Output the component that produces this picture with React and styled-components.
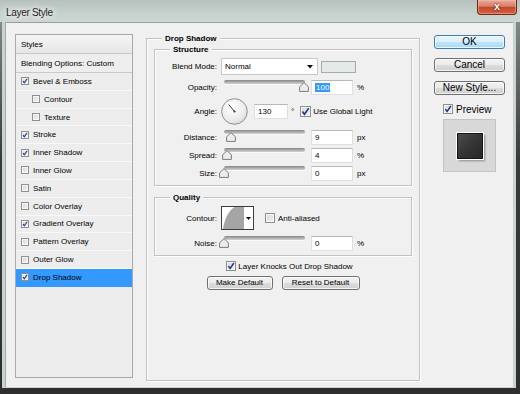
import React from 'react';
import styled, { createGlobalStyle } from 'styled-components';

const Global = createGlobalStyle`
  html, body { margin: 0; padding: 0; background: #3a3a3a; }
  body { font-family: "Liberation Sans", Arial, sans-serif; }
  * { box-sizing: border-box; }
`;

const Window = styled.div`
  width: 520px;
  height: 394px;
  display: flex;
  flex-direction: column;
  overflow: hidden;
  background: linear-gradient(180deg, #8f9996 0px, #6a706e 60px, #3a3a3a 160px, #2f2f2f 100%);
`;

const TitleBar = styled.div`
  height: 22px;
  flex: none;
  display: flex;
  align-items: flex-start;
  background: linear-gradient(180deg, #b6c1bd 0%, #c6d0cd 55%, #cdd7d4 100%);
`;

const TitleText = styled.div`
  padding: 7px 0 0 6px;
  font-family: "Liberation Sans", Arial, sans-serif;
  font-size: 10px;
  line-height: 12px;
  letter-spacing: -0.3px;
  color: #1c1c1c;
  text-shadow: 0 0 4px #fff, 0 0 8px #fff, 0 0 12px rgba(255, 255, 255, 0.8);
`;

const CloseButton = styled.div`
  margin-left: auto;
  margin-right: 3px;
  width: 40px;
  height: 15px;
  border: 1px solid #6b2a1c;
  border-top: none;
  border-radius: 0 0 4px 4px;
  background: linear-gradient(180deg, #e9a897 0%, #d98068 45%, #c4482c 52%, #d2603f 100%);
  box-shadow: inset 0 0 0 1px rgba(255, 200, 180, 0.45);
  display: flex;
  align-items: center;
  justify-content: center;
  color: #fff;
  font-family: "Liberation Sans", Arial, sans-serif;
  font-weight: bold;
  font-size: 11px;
  line-height: 11px;
  padding-bottom: 2px;
  text-shadow: 0 0 2px #5a1508, 0 0 1px #5a1508;
`;

const Frame = styled.div`
  flex: 1;
  display: flex;
  padding: 0 4px 6px 2px;
`;

const FrameInner = styled.div`
  flex: 1;
  display: flex;
  padding: 0 3px 1px 3px;
  background: #cbd3d0;
`;

const Client = styled.div`
  flex: 1;
  display: flex;
  align-items: flex-start;
  background: #f0f0f0;
  border-top: 1px solid #98a19e;
  border-left: 1px solid #a3aba8;
  padding: 11px 0 0 9px;
  font-size: 8px;
  color: #000;
`;

/* ---------- Styles list ---------- */

const StylesList = styled.div`
  width: 118px;
  height: 344px;
  flex: none;
  border: 1px solid #a9a9a9;
  background: #ededed;
  display: flex;
  flex-direction: column;
`;

const ListHeader = styled.div`
  height: 19px;
  flex: none;
  display: flex;
  align-items: center;
  padding-left: 5px;
  border-bottom: 1px solid #c9c9c9;
  background: ${p => (p.$head ? 'linear-gradient(180deg, #f5f5f5, #e6e6e6)' : '#eeeeee')};
`;

const ListItem = styled.div`
  height: 17.82px;
  flex: none;
  display: flex;
  align-items: center;
  gap: 4px;
  padding-left: ${p => (p.$indent ? 16 : 5)}px;
  border-bottom: 1px solid ${p => (p.$selected ? '#3399ff' : '#f9f9f9')};
  background: ${p => (p.$selected ? '#3399ff' : 'transparent')};
`;

/* ---------- Checkbox ---------- */

const CheckBoxBox = styled.span`
  flex: none;
  width: ${p => p.$size}px;
  height: ${p => p.$size}px;
  border: 1px solid #8e8f8f;
  background: linear-gradient(135deg, #d3d6db 0%, #f5f5f5 100%);
  box-shadow: inset 0 0 0 1px #f6f6f6;
  display: flex;
  align-items: center;
  justify-content: center;
  margin-left: ${p => p.$ml || 0}px;
`;

function Check({ size = 10, checked, ml }) {
  return (
    <CheckBoxBox $size={size} $ml={ml}>
      {checked && (
        <svg width={size - 2} height={size - 2} viewBox="0 0 8 8">
          <path d="M1.3 4.1 L3.1 6.5 L6.9 1" fill="none" stroke="#1d3b8f" strokeWidth="1.5" />
        </svg>
      )}
    </CheckBoxBox>
  );
}

/* ---------- Group boxes ---------- */

const GroupBox = styled.div`
  position: relative;
  flex: none;
  width: ${p => p.$w}px;
  height: ${p => p.$h}px;
  margin-top: ${p => p.$mt || 0}px;
  margin-left: ${p => p.$ml || 0}px;
  border: 1px solid #c2c2c2;
  box-shadow: inset 1px 1px 0 #fff, 1px 1px 0 #fff;
  padding: ${p => p.$pad};
  display: flex;
  flex-direction: column;
`;

const Legend = styled.span`
  position: absolute;
  top: -6px;
  left: 15px;
  padding: 0 3px;
  background: #f0f0f0;
  font-weight: bold;
  font-size: 8px;
  line-height: 11px;
`;

const Row = styled.div`
  display: flex;
  align-items: center;
  flex: none;
  height: ${p => p.$h}px;
  margin-top: ${p => p.$mt || 0}px;
`;

const Label = styled.span`
  width: 62px;
  flex: none;
  text-align: right;
  margin-right: 4px;
  white-space: nowrap;
`;

const Field = styled.div`
  flex: none;
  width: ${p => p.$w}px;
  height: 15px;
  margin-left: ${p => p.$ml || 0}px;
  background: #fff;
  border: 1px solid #dcdfe3;
  border-top-color: #b5b8be;
  padding-left: 3px;
  display: flex;
  align-items: center;
`;

const Selected = styled.span`
  background: #3399ff;
  color: #fff;
  padding: 0 1px;
`;

const Unit = styled.span`
  margin-left: ${p => p.$ml || 4}px;
`;

const SelectBox = styled.div`
  flex: none;
  width: 97px;
  height: 17px;
  background: #fff;
  border: 1px solid #c5c8cc;
  display: flex;
  align-items: center;
  justify-content: space-between;
  padding: 0 4px 0 3px;
`;

const Swatch = styled.div`
  flex: none;
  width: 35px;
  height: 12px;
  margin-left: 3px;
  background: #e2eae7;
  border: 1px solid #a7aaa9;
`;

const SliderWrap = styled.div`
  position: relative;
  flex: none;
  width: 87px;
  height: 16px;
  margin-right: 3px;
`;

const Track = styled.div`
  margin: 1px 0 0 3px;
  width: 81px;
  height: 4px;
  border-radius: 2px;
  background: linear-gradient(180deg, #858585 0%, #a9a9a9 45%, #d2d2d2 100%);
  box-shadow: 0 1px 0 #fafafa;
`;

const ThumbSvg = styled.svg`
  position: absolute;
  top: 3px;
`;

function Slider({ pct }) {
  const left = 3 + pct * 80 - 5;
  return (
    <SliderWrap>
      <Track />
      <ThumbSvg width="10" height="10" viewBox="0 0 10 10" style={{ left }}>
        <path d="M5 0.6 L9.4 4.8 L9.4 9.4 L0.6 9.4 L0.6 4.8 Z" fill="#ececec" stroke="#7b7b7b" strokeWidth="1" />
      </ThumbSvg>
    </SliderWrap>
  );
}

function Dial() {
  return (
    <svg width="27" height="27" viewBox="0 0 27 27" style={{ flex: 'none' }}>
      <defs>
        <radialGradient id="dialg" cx="40%" cy="35%" r="70%">
          <stop offset="0%" stopColor="#ffffff" />
          <stop offset="70%" stopColor="#ececec" />
          <stop offset="100%" stopColor="#d6d6d6" />
        </radialGradient>
      </defs>
      <circle cx="13.5" cy="13.5" r="12.8" fill="url(#dialg)" stroke="#8f8f8f" strokeWidth="1" />
      <line x1="13.5" y1="13.5" x2="7.7" y2="6.6" stroke="#333" strokeWidth="1" />
      <circle cx="13.5" cy="13.5" r="1.1" fill="#333" />
    </svg>
  );
}

const ContourBox = styled.div`
  flex: none;
  width: 33px;
  height: 24px;
  border: 1px solid #3d3d3d;
  background: #fff;
  display: flex;
`;

const ContourPreview = styled.div`
  width: 22px;
  height: 22px;
  flex: none;
  border-right: 1px solid #9a9a9a;
`;

const ContourArrow = styled.div`
  flex: 1;
  display: flex;
  align-items: center;
  justify-content: center;
`;

const CheckText = styled.span`
  margin-left: ${p => p.$ml || 3}px;
  white-space: nowrap;
`;

const CenterRow = styled.div`
  display: flex;
  align-items: center;
  justify-content: center;
  flex: none;
  height: ${p => p.$h}px;
  margin-top: ${p => p.$mt || 0}px;
  padding-left: ${p => p.$pl || 0}px;
  gap: ${p => p.$gap || 0}px;
`;

const Button = styled.div`
  flex: none;
  width: ${p => p.$w}px;
  height: 14px;
  border: 1px solid ${p => (p.$primary ? '#3c7fb1' : '#707070')};
  border-radius: 3px;
  background: ${p =>
    p.$primary
      ? 'linear-gradient(180deg, #eaf6fd 0%, #d9f0fc 50%, #bee6fd 50%, #a7d9f5 100%)'
      : 'linear-gradient(180deg, #f2f2f2 0%, #ebebeb 50%, #dddddd 50%, #cfcfcf 100%)'};
  box-shadow: inset 0 0 0 1px rgba(255, 255, 255, 0.75);
  display: flex;
  align-items: center;
  justify-content: center;
  font-size: ${p => p.$fs || 8}px;
  line-height: 12px;
  color: #000;
  white-space: nowrap;
`;

/* ---------- Right column ---------- */

const SideColumn = styled.div`
  flex: none;
  width: 71px;
  margin-left: 14px;
  margin-top: 1px;
  display: flex;
  flex-direction: column;
  gap: 9px;
  font-size: 10px;
`;

const PreviewRow = styled.div`
  display: flex;
  align-items: center;
  height: 10px;
  padding-left: 9px;
`;

const PreviewBox = styled.div`
  width: 53px;
  height: 53px;
  margin-left: 9px;
  margin-top: -4px;
  background: #d8d8d8;
  border: 1px solid #c4c4c4;
  display: flex;
  align-items: center;
  justify-content: center;
`;

const PreviewSwatch = styled.div`
  width: 26px;
  height: 26px;
  margin-top: 1px;
  background: linear-gradient(135deg, #4c4c4c 0%, #353535 50%, #262626 100%);
  border: 1px solid #151515;
  box-shadow: 0 0 0 1px #ffffff, 2px 2px 2px rgba(0, 0, 0, 0.35);
`;

const MainArea = styled.div`
  display: flex;
  flex-direction: column;
`;

const styleItems = [
  { name: 'Bevel & Emboss', checked: true },
  { name: 'Contour', indent: true },
  { name: 'Texture', indent: true },
  { name: 'Stroke', checked: true },
  { name: 'Inner Shadow', checked: true },
  { name: 'Inner Glow' },
  { name: 'Satin' },
  { name: 'Color Overlay' },
  { name: 'Gradient Overlay', checked: true },
  { name: 'Pattern Overlay' },
  { name: 'Outer Glow' },
  { name: 'Drop Shadow', checked: true, selected: true },
];

const sliderRows = [
  { label: 'Distance:', value: '9', unit: 'px', pct: 0.09, mt: 5 },
  { label: 'Spread:', value: '4', unit: '%', pct: 0.04, mt: 2 },
  { label: 'Size:', value: '0', unit: 'px', pct: 0, mt: 2 },
];

export default function App() {
  return (
    <>
      <Global />
      <Window>
        <TitleBar>
          <TitleText>Layer Style</TitleText>
          <CloseButton>x</CloseButton>
        </TitleBar>
        <Frame>
          <FrameInner>
            <Client>
              <StylesList>
                <ListHeader $head>Styles</ListHeader>
                <ListHeader>Blending Options: Custom</ListHeader>
                {styleItems.map(it => (
                  <ListItem key={it.name} $indent={it.indent} $selected={it.selected}>
                    <Check size={8} checked={it.checked} />
                    <span>{it.name}</span>
                  </ListItem>
                ))}
              </StylesList>

              <GroupBox $w={274} $h={343} $mt={4} $ml={13} $pad="10px 7px 0 7px">
                <Legend>Drop Shadow</Legend>
                <GroupBox $w={258} $h={137} $pad="8px 0 0 0">
                  <Legend>Structure</Legend>
                  <Row $h={17}>
                    <Label>Blend Mode:</Label>
                    <SelectBox>
                      <span>Normal</span>
                      <svg width="6" height="4" viewBox="0 0 6 4">
                        <path d="M0 0 L6 0 L3 3.5 Z" fill="#111" />
                      </svg>
                    </SelectBox>
                    <Swatch />
                  </Row>
                  <Row $h={16} $mt={4}>
                    <Label>Opacity:</Label>
                    <Slider pct={1} />
                    <Field $w={42}>
                      <Selected>100</Selected>
                    </Field>
                    <Unit>%</Unit>
                  </Row>
                  <Row $h={26} $mt={3}>
                    <Label>Angle:</Label>
                    <Dial />
                    <Field $w={34} $ml={6}>130</Field>
                    <Unit $ml={3}>°</Unit>
                    <Check size={11} checked ml={6} />
                    <CheckText $ml={2}>Use Global Light</CheckText>
                  </Row>
                  {sliderRows.map(r => (
                    <Row key={r.label} $h={16} $mt={r.mt}>
                      <Label>{r.label}</Label>
                      <Slider pct={r.pct} />
                      <Field $w={42}>{r.value}</Field>
                      <Unit>{r.unit}</Unit>
                    </Row>
                  ))}
                </GroupBox>

                <GroupBox $w={258} $h={59} $mt={11} $pad="8px 0 0 0">
                  <Legend>Quality</Legend>
                  <Row $h={24}>
                    <Label>Contour:</Label>
                    <ContourBox>
                      <ContourPreview>
                        <svg width="22" height="22" viewBox="0 0 22 22">
                          <path d="M1 22 C 2 14, 6 4, 12.5 0 L22 0 L22 22 Z" fill="#a5a5a5" />
                        </svg>
                      </ContourPreview>
                      <ContourArrow>
                        <svg width="5" height="3" viewBox="0 0 5 3">
                          <path d="M0 0 L5 0 L2.5 3 Z" fill="#111" />
                        </svg>
                      </ContourArrow>
                    </ContourBox>
                    <Check size={10} ml={11} />
                    <CheckText>Anti-aliased</CheckText>
                  </Row>
                  <Row $h={16} $mt={5}>
                    <Label>Noise:</Label>
                    <Slider pct={0} />
                    <Field $w={42}>0</Field>
                    <Unit>%</Unit>
                  </Row>
                </GroupBox>

                <MainArea>
                  <CenterRow $h={12} $mt={4} $pl={13}>
                    <Check size={10} checked />
                    <CheckText $ml={2}>Layer Knocks Out Drop Shadow</CheckText>
                  </CenterRow>
                  <CenterRow $h={14} $mt={4} $gap={9}>
                    <Button $w={66}>Make Default</Button>
                    <Button $w={78}>Reset to Default</Button>
                  </CenterRow>
                </MainArea>
              </GroupBox>

              <SideColumn>
                <Button $w={71} $primary $fs={10}>OK</Button>
                <Button $w={71} $fs={10}>Cancel</Button>
                <Button $w={71} $fs={10}>New Style...</Button>
                <PreviewRow>
                  <Check size={10} checked />
                  <CheckText>Preview</CheckText>
                </PreviewRow>
                <PreviewBox>
                  <PreviewSwatch />
                </PreviewBox>
              </SideColumn>
            </Client>
          </FrameInner>
        </Frame>
      </Window>
    </>
  );
}
